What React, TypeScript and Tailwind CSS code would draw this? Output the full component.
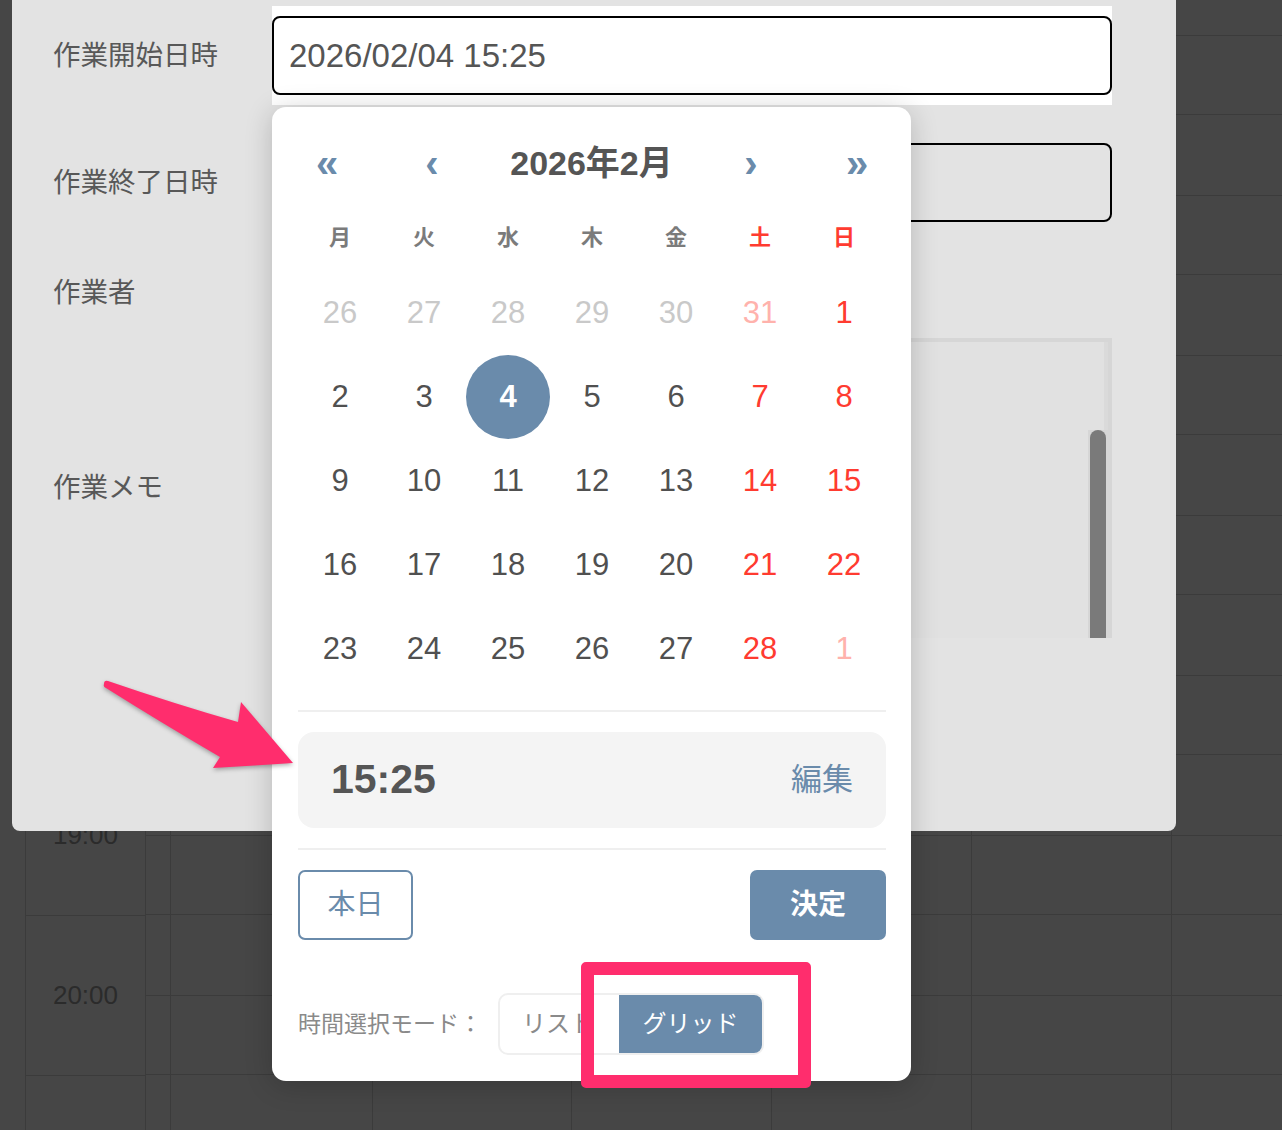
import React from 'react';

type Day = { d: number; c: string; sel?: boolean };

const GRAY = 'text-[#c9c9c9]';
const PALE = 'text-[#ffb2ac]';
const RED = 'text-[#ff3b30]';
const INK = 'text-[#505050]';

const WEEKS: Day[][] = [
  [
    { d: 26, c: GRAY }, { d: 27, c: GRAY }, { d: 28, c: GRAY }, { d: 29, c: GRAY },
    { d: 30, c: GRAY }, { d: 31, c: PALE }, { d: 1, c: RED },
  ],
  [
    { d: 2, c: INK }, { d: 3, c: INK }, { d: 4, c: INK, sel: true }, { d: 5, c: INK },
    { d: 6, c: INK }, { d: 7, c: RED }, { d: 8, c: RED },
  ],
  [
    { d: 9, c: INK }, { d: 10, c: INK }, { d: 11, c: INK }, { d: 12, c: INK },
    { d: 13, c: INK }, { d: 14, c: RED }, { d: 15, c: RED },
  ],
  [
    { d: 16, c: INK }, { d: 17, c: INK }, { d: 18, c: INK }, { d: 19, c: INK },
    { d: 20, c: INK }, { d: 21, c: RED }, { d: 22, c: RED },
  ],
  [
    { d: 23, c: INK }, { d: 24, c: INK }, { d: 25, c: INK }, { d: 26, c: INK },
    { d: 27, c: INK }, { d: 28, c: RED }, { d: 1, c: PALE },
  ],
];

const WEEKDAYS = [
  { t: '月', red: false }, { t: '火', red: false }, { t: '水', red: false }, { t: '木', red: false },
  { t: '金', red: false }, { t: '土', red: true }, { t: '日', red: true },
];

// half-hour rows behind the dialog (alternating 79 / 81 px like the original)
const ROWS = [36, 79, 81, 79, 81, 79, 81, 79, 81, 79, 81, 79, 81, 79, 81];
const HOURS = ['', '', '', '', '', '19:00', '20:00', ''];

const COLUMNS = ['w-[202px]', 'w-[199px]', 'w-[200px]', 'w-[200px]', 'w-[200px]', 'flex-1'];

const CalendarBackground = () => (
  <div className="flex h-full pl-[25px]">
    {/* time column */}
    <div className="flex w-[120px] shrink-0 flex-col border-l border-[#3b3b3b]">
      <div className="h-[116px] shrink-0 border-b border-[#3b3b3b]" />
      {HOURS.slice(1).map((h, i) => (
        <div
          key={i}
          className="flex h-[160px] shrink-0 items-center justify-center border-b border-[#3b3b3b] text-[26px] text-[#2b2b2b]"
        >
          {h}
        </div>
      ))}
    </div>
    <div className="flex w-[25px] shrink-0 flex-col border-l border-[#3b3b3b]">
      {ROWS.map((h, i) => (
        <div key={i} className="shrink-0 border-b border-[#3b3b3b]" style={{ height: h }} />
      ))}
    </div>
    {COLUMNS.map((w, c) => (
      <div key={c} className={`${w} flex shrink-0 flex-col border-l border-[#3b3b3b]`}>
        {ROWS.map((h, i) => (
          <div key={i} className="shrink-0 border-b border-[#3b3b3b]" style={{ height: h }} />
        ))}
      </div>
    ))}
  </div>
);

const Label = ({ children }: { children: React.ReactNode }) => (
  <div className="w-[219px] shrink-0 text-[27.5px] leading-none text-[#585858]">{children}</div>
);

const EditDialog = () => (
  <div className="absolute left-[12px] top-0 h-[831px] w-[1164px] rounded-b-[8px] bg-[#e3e3e3] pl-[41px] pt-[6px]">
    <div className="flex items-center">
      <Label>作業開始日時</Label>
      <div className="w-[840px] bg-white py-[10px]">
        <div className="flex h-[79px] items-center rounded-[8px] border-2 border-black pl-[15px] text-[33px] text-[#555]">
          2026/02/04 15:25
        </div>
      </div>
    </div>

    <div className="mt-[28px] flex items-center">
      <Label>作業終了日時</Label>
      <div className="w-[840px] py-[10px]">
        <div className="h-[79px] rounded-[8px] border-2 border-black" />
      </div>
    </div>

    <div className="mt-[31px] flex h-[60px] items-center">
      <Label>作業者</Label>
    </div>

    <div className="mt-[15px] flex items-center">
      <Label>作業メモ</Label>
      <div className="flex h-[300px] w-[840px] flex-col border-x-4 border-t-4 border-[#d6d6d6] bg-[#e1e1e1]">
        <div className="h-[88px] shrink-0 border-r-4 border-[#dadada]" />
        <div className="flex flex-1 justify-end">
          <div className="w-[20px] bg-[#d6d6d6] px-[2px]">
            <div className="h-full w-[16px] rounded-t-full bg-[#7a7a7a]" />
          </div>
        </div>
      </div>
    </div>
  </div>
);

const DatePicker = () => (
  <div className="absolute left-[272px] top-[107px] h-[974px] w-[639px] rounded-[14px] bg-white pl-[26px] pr-[25px] pt-[28px] shadow-[0_4px_28px_rgba(0,0,0,0.2)]">
    {/* month header */}
    <div className="flex h-[56px] items-center text-[#6a8bab]">
      <button className="w-[58px] text-center text-[40px] font-bold leading-none">«</button>
      <button className="ml-[47px] w-[58px] text-center text-[40px] font-bold leading-none">‹</button>
      <div className="flex-1 text-center text-[34px] font-bold text-[#555]">2026年2月</div>
      <button className="w-[58px] text-center text-[40px] font-bold leading-none">›</button>
      <button className="ml-[48px] w-[58px] text-center text-[40px] font-bold leading-none">»</button>
    </div>

    {/* weekdays */}
    <div className="mt-[20px] grid h-[52px] grid-cols-7 items-center text-center text-[22px] font-bold">
      {WEEKDAYS.map((w) => (
        <div key={w.t} className={w.red ? 'text-[#ff3b30]' : 'text-[#7b7b7b]'}>
          {w.t}
        </div>
      ))}
    </div>

    {/* dates */}
    <div className="mt-[8px] grid grid-cols-7">
      {WEEKS.flat().map((day, i) => (
        <div key={i} className="flex h-[84px] items-center justify-center">
          {day.sel ? (
            <span className="flex h-[84px] w-[84px] items-center justify-center rounded-full bg-[#6a8bab] text-[31px] font-bold text-white">
              {day.d}
            </span>
          ) : (
            <span className={`text-[31px] ${day.c}`}>{day.d}</span>
          )}
        </div>
      ))}
    </div>

    <div className="mt-[19px] h-[2px] bg-[#efefef]" />

    {/* time */}
    <div className="mt-[20px] flex h-[96px] items-center justify-between rounded-[16px] bg-[#f4f4f4] px-[33px]">
      <span className="text-[41px] font-bold text-[#555]">15:25</span>
      <span className="text-[31px] text-[#6a8bab]">編集</span>
    </div>

    <div className="mt-[20px] h-[2px] bg-[#efefef]" />

    {/* actions */}
    <div className="mt-[20px] flex justify-between">
      <button className="h-[70px] w-[115px] rounded-[7px] border-2 border-[#6a8bab] text-[28px] text-[#6a8bab]">
        本日
      </button>
      <button className="h-[70px] w-[136px] rounded-[7px] bg-[#6a8bab] text-[28px] font-bold text-white">
        決定
      </button>
    </div>

    {/* mode switch */}
    <div className="mt-[53px] flex items-center">
      <span className="text-[23px] text-[#8a8a8a]">時間選択モード：</span>
      <div className="ml-[16px] flex h-[62px] rounded-[10px] border-2 border-[#efefef]">
        <button className="w-[119px] pl-[22px] text-left text-[24px] text-[#8a8a8a]">リスト</button>
        <button className="w-[143px] rounded-r-[8px] bg-[#6a8bab] text-[24px] text-white">グリッド</button>
      </div>
    </div>
  </div>
);

const Annotations = () => (
  <>
    <svg
      className="absolute left-[90px] top-[670px] h-[110px] w-[215px] drop-shadow-[0_2px_2px_rgba(0,0,0,0.3)]"
      viewBox="0 0 215 110"
    >
      <path
        d="M14 14 Q14 10 18 11 Q85 34 148 52 L151 32 L203 93 L123 98 L130 87 Q70 52 16 18 Q13 17 14 14 Z"
        fill="#ff2d6d"
      />
    </svg>
    <div className="absolute left-[581px] top-[962px] h-[126px] w-[230px] rounded-[5px] border-[13px] border-[#ff2d6d]" />
  </>
);

export default function App() {
  return (
    <div className="relative h-[1130px] w-[1282px] overflow-hidden bg-[#464646] font-['Liberation_Sans','Noto_Sans_CJK_JP',sans-serif]">
      <CalendarBackground />
      <EditDialog />
      <DatePicker />
      <Annotations />
    </div>
  );
}
